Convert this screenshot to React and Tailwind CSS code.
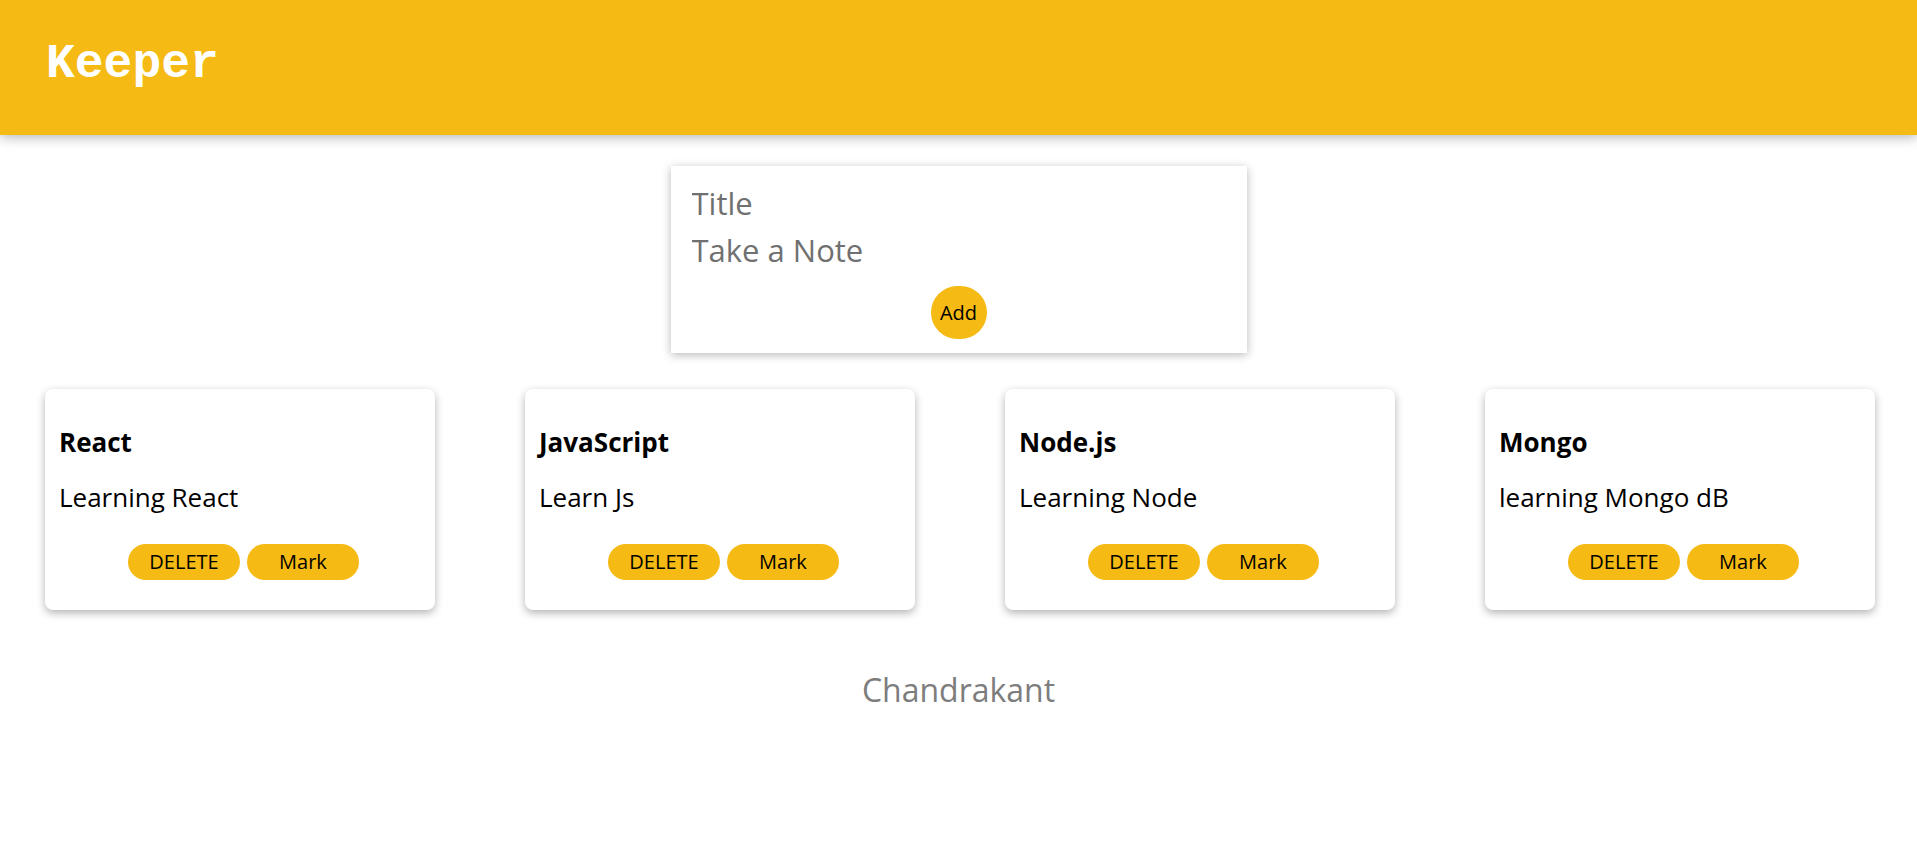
import React from "react";

const notes = [
  { title: "React", content: "Learning React" },
  { title: "JavaScript", content: "Learn Js" },
  { title: "Node.js", content: "Learning Node" },
  { title: "Mongo", content: "learning Mongo dB" },
];

function Note({ title, content }) {
  return (
    <div className="w-[390px] h-[221px] shrink-0 bg-white rounded-[8px] shadow-[0_3px_9px_rgba(0,0,0,0.3)] pt-[35px] pl-[14px] pr-[14px] flex flex-col">
      <h1 className="text-[26px] leading-[36px] font-bold text-black">{title}</h1>
      <p className="mt-[19px] text-[26px] leading-[36px] text-black">{content}</p>
      <div className="mt-[29px] flex justify-center gap-[7px] pl-[7px]">
        <button className="w-[112px] h-[36px] rounded-full bg-[#f5ba13] text-[20px] leading-none text-black">
          DELETE
        </button>
        <button className="w-[112px] h-[36px] rounded-full bg-[#f5ba13] text-[20px] leading-none text-black">
          Mark
        </button>
      </div>
    </div>
  );
}

export default function App() {
  return (
    <div className="min-h-[844px] bg-white font-['Open_Sans',sans-serif]">
      <header className="relative z-10 h-[135px] bg-[#f5ba13] shadow-[0_2px_12px_0_rgba(0,0,0,0.3)] pl-[46px] pt-[41px]">
        <h1 className="font-['Liberation_Mono',monospace] font-bold text-white text-[48px] leading-[47px]">
          Keeper
        </h1>
      </header>

      <form className="mt-[31px] w-[576px] mx-auto bg-white shadow-[0_2px_9px_rgba(0,0,0,0.28)] pt-[14px] pb-[14px] pl-[21px] pr-[18px] flex flex-col">
        <input
          name="title"
          placeholder="Title"
          className="h-[47px] text-[31px] leading-[47px] outline-none bg-transparent placeholder:text-[#707070] text-[#333]"
        />
        <textarea
          name="content"
          placeholder="Take a Note"
          rows={1}
          className="h-[47px] text-[31px] leading-[47px] outline-none resize-none overflow-hidden p-0 bg-transparent placeholder:text-[#707070] text-[#333]"
        />
        <div className="mt-[12px] flex justify-center pr-[3px]">
          <button
            type="button"
            className="w-[56px] h-[53px] rounded-full bg-[#f5ba13] text-[20px] leading-none text-black"
          >
            Add
          </button>
        </div>
      </form>

      <div className="mt-[36px] flex pl-[45px] gap-[90px]">
        {notes.map((n) => (
          <Note key={n.title} {...n} />
        ))}
      </div>

      <footer className="mt-[58px] text-center">
        <p className="text-[32px] leading-[44px] text-[#7d7d7d]">Chandrakant</p>
      </footer>
    </div>
  );
}
